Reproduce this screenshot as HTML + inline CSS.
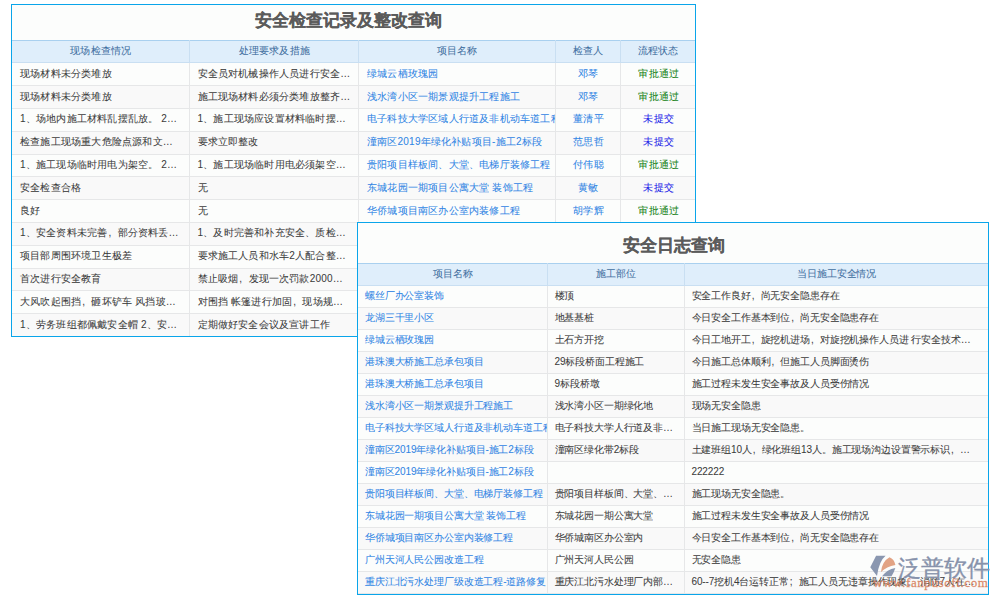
<!DOCTYPE html>
<html><head><meta charset="utf-8">
<style>
*{box-sizing:border-box;margin:0;padding:0}
html,body{width:1000px;height:600px;overflow:hidden;background:#fff;font-family:"Liberation Sans",sans-serif;}
.p{position:absolute;border:1px solid #0aa5ea;background:#fcfdfc;overflow:hidden}
.t{position:absolute;left:0;right:0;text-align:center;font-weight:bold;color:#5b5b5b;-webkit-text-stroke:0.2px #5b5b5b}
table{position:absolute;left:0;-webkit-text-stroke:0.05px;border-collapse:collapse;table-layout:fixed;font-size:10px;letter-spacing:-0.13px;color:#3b3b3b}
td,th{height:22px;line-height:12px;border-right:1px solid #e6e7e8;border-bottom:1px solid #e6e7e8;white-space:nowrap;overflow:hidden;text-overflow:clip;padding:0 6px 1px 7px;font-weight:normal;text-align:left}
th{background:#dfeefb;color:#3f6e9f;text-align:center;border-right-color:#c9dff2;border-bottom-color:#c9dff2}
tr.h th{border-top:1px solid #a9d0ef}
td:last-child,th:last-child{border-right:none}
.l{color:#2f84e4}
.c{text-align:center}
.g{color:#168216}
.b{color:#2020e8}
.t1{letter-spacing:0.2px}.t1 td{padding-left:8px}.t1 td{height:22.82px}.t1 th{height:22.3px}
tr:nth-child(2n+1) td{background:#f9f9f9}
.cm{display:inline-block;width:9.87px;font-weight:normal;padding-left:1px}.t1 .cm{width:10.2px}
</style></head><body>
<div class="p" id="p1" style="left:11px;top:4px;width:685px;height:333px">
  <div class="t" style="top:2px;padding-right:10px;font-size:17.1px;line-height:28px">安全检查记录及整改查询</div>
  <table style="top:35px;width:683px" class="t1">
    <colgroup><col style="width:177px"><col style="width:169.5px"><col style="width:196.5px"><col style="width:65px"><col style="width:75px"></colgroup>
    <tr class="h"><th>现场检查情况</th><th>处理要求及措施</th><th>项目名称</th><th>检查人</th><th>流程状态</th></tr>
    <tr><td>现场材料未分类堆放</td><td>安全员对机械操作人员进行安全…</td><td class="l">绿城云栖玫瑰园</td><td class="l c">邓琴</td><td class="g c">审批通过</td></tr>
    <tr><td>现场材料未分类堆放</td><td>施工现场材料必须分类堆放整齐…</td><td class="l">浅水湾小区一期景观提升工程施工</td><td class="l c">邓琴</td><td class="g c">审批通过</td></tr>
    <tr><td>1、场地内施工材料乱摆乱放。 2…</td><td>1、施工现场应设置材料临时摆…</td><td class="l">电子科技大学区域人行道及非机动车道工程</td><td class="l c">董清平</td><td class="b c">未提交</td></tr>
    <tr><td>检查施工现场重大危险点源和文…</td><td>要求立即整改</td><td class="l">潼南区2019年绿化补贴项目-施工2标段</td><td class="l c">范思哲</td><td class="b c">未提交</td></tr>
    <tr><td>1、施工现场临时用电为架空。 2…</td><td>1、施工现场临时用电必须架空…</td><td class="l">贵阳项目样板间、大堂、电梯厅装修工程</td><td class="l c">付伟聪</td><td class="g c">审批通过</td></tr>
    <tr><td>安全检查合格</td><td>无</td><td class="l">东城花园一期项目公寓大堂 装饰工程</td><td class="l c">黄敏</td><td class="b c">未提交</td></tr>
    <tr><td>良好</td><td>无</td><td class="l">华侨城项目南区办公室内装修工程</td><td class="l c">胡学辉</td><td class="g c">审批通过</td></tr>
    <tr><td>1、安全资料未完善<b class="cm">,</b>部分资料丢…</td><td>1、及时完善和补充安全、质检…</td><td class="l"></td><td class="l c"></td><td class=" c"></td></tr>
    <tr><td>项目部周围环境卫生极差</td><td>要求施工人员和水车2人配合整…</td><td class="l"></td><td class="l c"></td><td class=" c"></td></tr>
    <tr><td>首次进行安全教育</td><td>禁止吸烟<b class="cm">,</b>发现一次罚款2000…</td><td class="l"></td><td class="l c"></td><td class=" c"></td></tr>
    <tr><td>大风吹起围挡<b class="cm">,</b>砸坏铲车 风挡玻…</td><td>对围挡 帐篷进行加固<b class="cm">,</b>现场规…</td><td class="l"></td><td class="l c"></td><td class=" c"></td></tr>
    <tr><td>1、劳务班组都佩戴安全帽 2、安…</td><td>定期做好安全会议及宣讲工作</td><td class="l"></td><td class="l c"></td><td class=" c"></td></tr>
  </table>
</div>

<div class="p" id="p2" style="left:357px;top:222px;width:632px;height:373px">
  <div class="t" style="top:8.5px;padding-left:2px;font-size:17px;line-height:28px">安全日志查询</div>
  <table style="top:40px;width:630px">
    <colgroup><col style="width:189px"><col style="width:137px"><col style="width:304px"></colgroup>
    <tr class="h"><th>项目名称</th><th>施工部位</th><th>当日施工安全情况</th></tr>
    <tr><td class="l">螺丝厂办公室装饰</td><td>楼顶</td><td>安全工作良好<b class="cm">,</b>尚无安全隐患存在</td></tr>
    <tr><td class="l">龙湖三千里小区</td><td>地基基桩</td><td>今日安全工作基本到位<b class="cm">,</b>尚无安全隐患存在</td></tr>
    <tr><td class="l">绿城云栖玫瑰园</td><td>土石方开挖</td><td>今日工地开工<b class="cm">,</b>旋挖机进场<b class="cm">,</b>对旋挖机操作人员进 行安全技术…</td></tr>
    <tr><td class="l">港珠澳大桥施工总承包项目</td><td>29标段桥面工程施工</td><td>今日施工总体顺利<b class="cm">,</b>但施工人员脚面烫伤</td></tr>
    <tr><td class="l">港珠澳大桥施工总承包项目</td><td>9标段桥墩</td><td>施工过程未发生安全事故及人员受伤情况</td></tr>
    <tr><td class="l">浅水湾小区一期景观提升工程施工</td><td>浅水湾小区一期绿化地</td><td>现场无安全隐患</td></tr>
    <tr><td class="l">电子科技大学区域人行道及非机动车道工程</td><td>电子科技大学人行道及非…</td><td>当日施工现场无安全隐患。</td></tr>
    <tr><td class="l">潼南区2019年绿化补贴项目-施工2标段</td><td>潼南区绿化带2标段</td><td>土建班组10人<b class="cm">,</b>绿化班组13人。施工现场沟边设置警示标识<b class="cm">,</b>…</td></tr>
    <tr><td class="l">潼南区2019年绿化补贴项目-施工2标段</td><td></td><td>222222</td></tr>
    <tr><td class="l">贵阳项目样板间、大堂、电梯厅装修工程</td><td>贵阳项目样板间、大堂、…</td><td>施工现场无安全隐患。</td></tr>
    <tr><td class="l">东城花园一期项目公寓大堂 装饰工程</td><td>东城花园一期公寓大堂</td><td>施工过程未发生安全事故及人员受伤情况</td></tr>
    <tr><td class="l">华侨城项目南区办公室内装修工程</td><td>华侨城南区办公室内</td><td>今日安全工作基本到位<b class="cm">,</b>尚无安全隐患存在</td></tr>
    <tr><td class="l">广州天河人民公园改造工程</td><td>广州天河人民公园</td><td>无安全隐患</td></tr>
    <tr><td class="l">重庆江北污水处理厂级改造工程-道路修复</td><td>重庆江北污水处理厂内部…</td><td>60--7挖机4台运转正常<b class="cm">;</b>施工人员无违章操作现象。 消防7人在…</td></tr>
  </table>
</div>

<div id="logo" style="position:absolute;left:860px;left:860px;top:545px;width:140px;height:55px;pointer-events:none">
  <svg width="40" height="40" viewBox="0 0 40 40" style="position:absolute;left:5px;top:5px">
    <path d="M5.3 17.2 L11.1 5.8 L20.6 5.8 Q14 11 12 26 Z" fill="#8a97b0"/>
    <path d="M15.9 22.2 Q17 11.5 24.5 7.3 Q29.2 9.2 30.4 14.9 Q21.5 16.3 15.9 22.2 Z" fill="#e2a384"/>
    <path d="M17 26.3 Q22 19.5 30.3 18 Q29 22.5 26.5 26.3 Z" fill="#8a97b0"/>
  </svg>
  <div style="position:absolute;left:38px;top:11px;font-size:22.5px;line-height:26px;color:#8792ab;-webkit-text-stroke:0.35px #8792ab;white-space:nowrap">泛普软件</div>
  <div style="position:absolute;left:13px;top:31px;font-family:'Liberation Serif',serif;font-size:13px;line-height:14px;color:rgba(214,124,88,0.85);-webkit-text-stroke:0.3px rgba(214,124,88,0.85);letter-spacing:0.6px;white-space:nowrap">www.fanpusoft.com</div>
</div>

</body></html>
